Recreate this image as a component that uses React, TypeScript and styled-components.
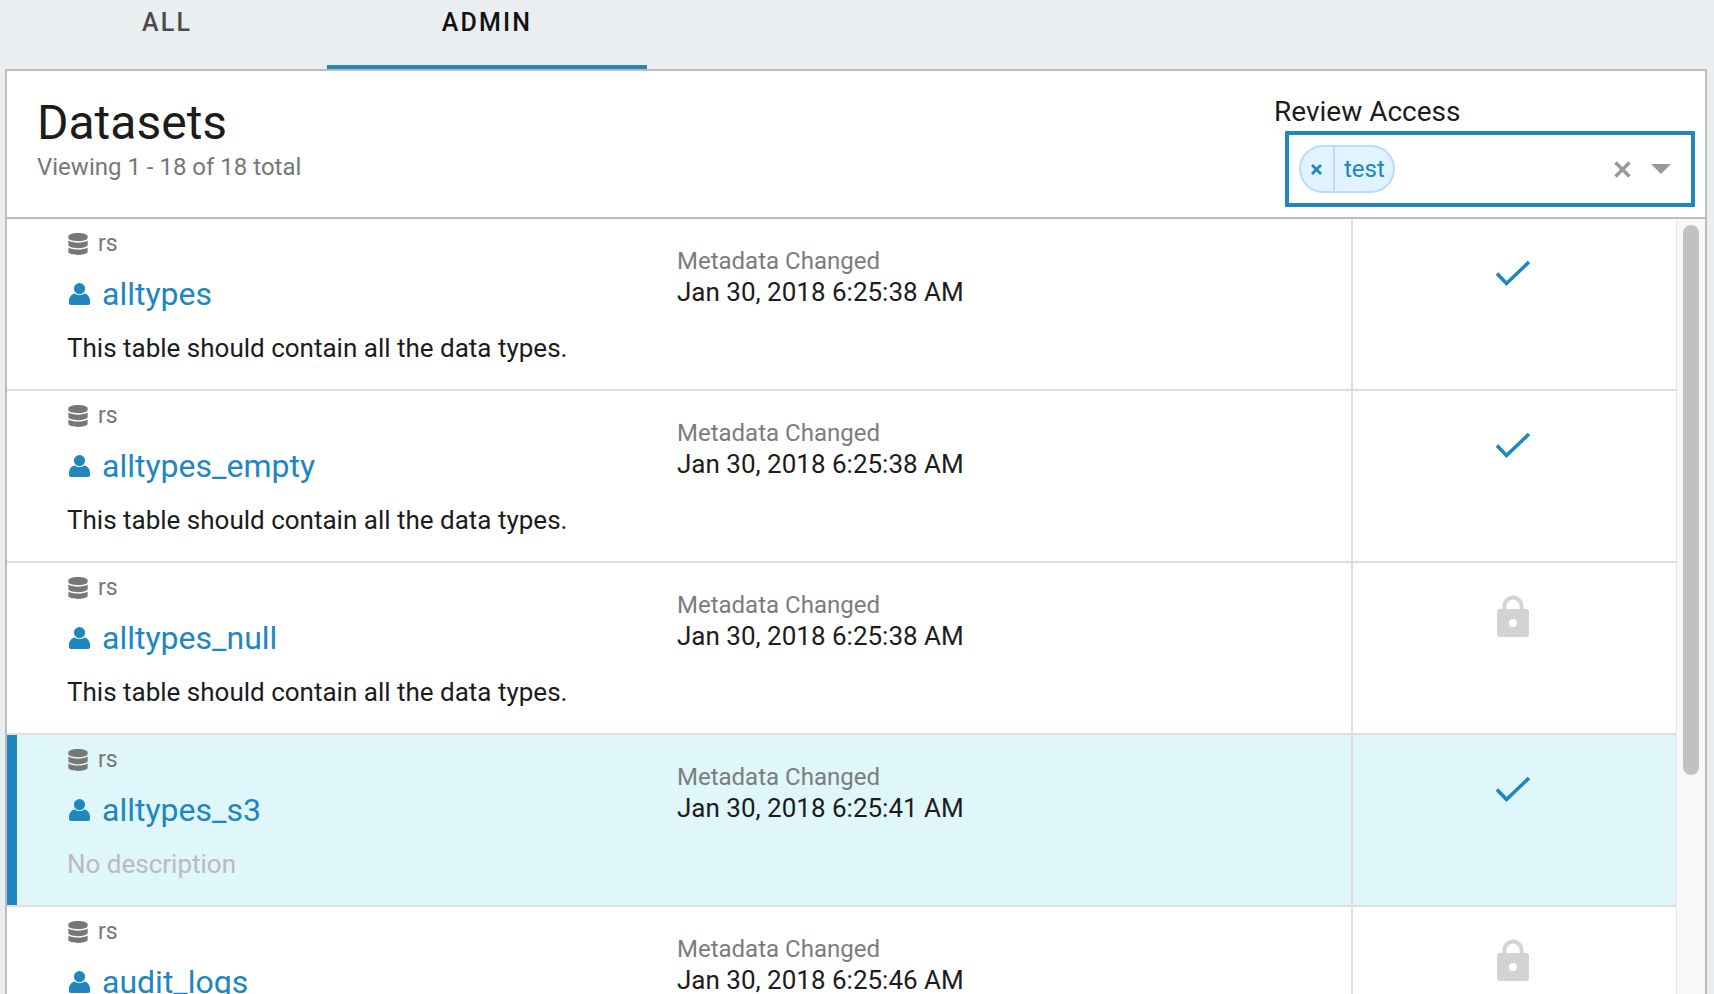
import styled, { createGlobalStyle } from "styled-components";
import { FaDatabase } from "react-icons/fa";

const BLUE = "#2086c0";
const LINE = "#dedede";
const BORDER = "#bcbcbc";

interface Dataset {
  name: string;
  description?: string;
  changed: string;
  access: boolean;
  selected?: boolean;
}

const DATASETS: Dataset[] = [
  {
    name: "alltypes",
    description: "This table should contain all the data types.",
    changed: "Jan 30, 2018 6:25:38 AM",
    access: true,
  },
  {
    name: "alltypes_empty",
    description: "This table should contain all the data types.",
    changed: "Jan 30, 2018 6:25:38 AM",
    access: true,
  },
  {
    name: "alltypes_null",
    description: "This table should contain all the data types.",
    changed: "Jan 30, 2018 6:25:38 AM",
    access: false,
  },
  {
    name: "alltypes_s3",
    changed: "Jan 30, 2018 6:25:41 AM",
    access: true,
    selected: true,
  },
  {
    // only the top of this row is on screen
    name: "audit_logs",
    description: "",
    changed: "Jan 30, 2018 6:25:46 AM",
    access: false,
  },
];

const CheckIcon = () => (
  <svg width="36" height="28" viewBox="0 0 36 28" fill="none">
    <path d="M2 13.5L11.5 23.5L34 2" stroke={BLUE} strokeWidth="3.6" />
  </svg>
);

const LockIcon = () => (
  <svg width="32" height="42" viewBox="0 0 32 42">
    <path
      d="M7.5 16V11a8.5 8.5 0 0 1 17 0v5"
      fill="none"
      stroke="#d3d3d3"
      strokeWidth="4"
    />
    <path
      fillRule="evenodd"
      fill="#d3d3d3"
      d="M3 14h26a3 3 0 0 1 3 3v22a3 3 0 0 1-3 3H3a3 3 0 0 1-3-3V17a3 3 0 0 1 3-3zM16 24a4 4 0 1 0 0 8a4 4 0 0 0 0-8z"
    />
  </svg>
);

const UserIcon = () => (
  <svg width="21" height="22" viewBox="0 0 21 22" fill={BLUE}>
    <circle cx="10.5" cy="5.6" r="5.6" />
    <path d="M6 10.5c1.2 1 2.8 1.6 4.5 1.6s3.3-.6 4.5-1.6c3.6.6 6 3.5 6 7.3V20a2 2 0 0 1-2 2H2a2 2 0 0 1-2-2v-2.200c0-3.800 2.400-6.700 6-7.300z" />
  </svg>
);

const App = () => (
  <Page>
    <GlobalStyle />
    <Tabs>
      <Tab>ALL</Tab>
      <Tab $active>ADMIN</Tab>
    </Tabs>
    <Panel>
      <Header>
        <div>
          <Title>Datasets</Title>
          <Count>Viewing 1 - 18 of 18 total</Count>
        </div>
        <Filter>
          <FilterLabel>Review Access</FilterLabel>
          <Select>
            <Chip>
              <ChipRemove>
                <svg width="11" height="11" viewBox="0 0 11 11">
                  <path d="M1 1L10 10M10 1L1 10" stroke={BLUE} strokeWidth="2.8" />
                </svg>
              </ChipRemove>
              <ChipLabel>test</ChipLabel>
            </Chip>
            <SelectControls>
              <svg width="17" height="17" viewBox="0 0 17 17">
                <path d="M1.5 1.5L15.5 15.5M15.5 1.5L1.5 15.5" stroke="#999" strokeWidth="3.4" />
              </svg>
              <Caret />
            </SelectControls>
          </Select>
        </Filter>
      </Header>
      <Body>
        <List>
          {DATASETS.map((d) => (
            <Row key={d.name} $selected={d.selected}>
              <Info>
                <Source>
                  <FaDatabase size={22} />
                  rs
                </Source>
                <Name>
                  <UserIcon />
                  {d.name}
                </Name>
                <Description $empty={d.description === undefined}>
                  {d.description ?? "No description"}
                </Description>
              </Info>
              <Meta>
                <MetaLabel>Metadata Changed</MetaLabel>
                <MetaValue>{d.changed}</MetaValue>
              </Meta>
              <AccessCell $locked={!d.access}>
                {d.access ? <CheckIcon /> : <LockIcon />}
              </AccessCell>
            </Row>
          ))}
        </List>
        <ScrollTrack>
          <ScrollThumb />
        </ScrollTrack>
      </Body>
    </Panel>
  </Page>
);

const GlobalStyle = createGlobalStyle`
  html, body {
    margin: 0;
    padding: 0;
    background: #eaeef1;
  }
  * {
    box-sizing: border-box;
  }
`;

const Page = styled.div`
  height: 994px;
  overflow: hidden;
  padding: 0 7px 0 5px;
  font-family: Roboto, "Liberation Sans", sans-serif;
  color: #1c1c1c;
`;

const Tabs = styled.div`
  display: flex;
  height: 69px;
  padding-left: 2px;
`;

const Tab = styled.div<{ $active?: boolean }>`
  width: 320px;
  padding-top: 8px;
  text-align: center;
  font-size: 25px;
  line-height: 30px;
  font-weight: 500;
  letter-spacing: 2.2px;
  color: ${(p) => (p.$active ? "#111" : "#4a4a4a")};
  border-bottom: 4px solid ${(p) => (p.$active ? BLUE : "transparent")};
`;

const Panel = styled.div`
  height: 925px;
  display: flex;
  flex-direction: column;
  background: #fff;
  border: 2px solid ${BORDER};
  border-bottom: none;
`;

const Header = styled.div`
  flex: none;
  height: 148px;
  display: flex;
  justify-content: space-between;
  padding: 23px 10px 0 30px;
  border-bottom: 2px solid ${BORDER};
`;

const Title = styled.h1`
  margin: 0;
  font-size: 48px;
  line-height: 58px;
  font-weight: 400;
`;

const Count = styled.div`
  font-size: 24px;
  line-height: 28px;
  margin-top: 1px;
  color: #777;
`;

const Filter = styled.div`
  display: flex;
  flex-direction: column;
  align-items: flex-end;
  margin-top: -2px;
`;

const FilterLabel = styled.div`
  align-self: flex-start;
  margin-left: -11px;
  font-size: 28px;
  line-height: 32px;
  margin-top: 4px;
  margin-bottom: 3px;
`;

const Select = styled.div`
  width: 410px;
  height: 76px;
  display: flex;
  align-items: center;
  justify-content: space-between;
  padding: 0 20px 0 10px;
  border: 4px solid ${BLUE};
`;

const Chip = styled.div`
  display: flex;
  align-items: stretch;
  height: 48px;
  border: 2px solid #b8dcff;
  border-radius: 24px;
  background: #e1f3ff;
  color: ${BLUE};
`;

const ChipRemove = styled.span`
  width: 34px;
  display: flex;
  align-items: center;
  justify-content: center;
  padding-right: 1px;
  border-right: 2px solid #b8dcff;
`;

const ChipLabel = styled.span`
  padding: 0 8px 0 9px;
  font-size: 24px;
  line-height: 44px;
`;

const SelectControls = styled.div`
  display: flex;
  align-items: center;
  gap: 20px;
`;

const Caret = styled.span`
  width: 0;
  height: 0;
  border-left: 10px solid transparent;
  border-right: 10px solid transparent;
  border-top: 10px solid #999;
`;

const Body = styled.div`
  flex: 1;
  min-height: 0;
  display: flex;
`;

const List = styled.div`
  flex: 1;
  min-width: 0;
  overflow: hidden;
`;

const Row = styled.div<{ $selected?: boolean }>`
  height: 172px;
  display: flex;
  padding-left: 10px;
  border-bottom: 2px solid ${LINE};
  background: ${(p) => (p.$selected ? "#dff6fa" : "#fff")};
  box-shadow: ${(p) => (p.$selected ? `inset 10px 0 0 ${BLUE}` : "none")};
`;

const Info = styled.div`
  width: 660px;
  padding: 10px 0 0 50px;
`;

const Source = styled.div`
  display: flex;
  align-items: center;
  gap: 9px;
  font-size: 23px;
  line-height: 30px;
  color: #777;

  svg {
    color: #777;
  }
`;

const Name = styled.div`
  display: flex;
  align-items: center;
  gap: 12px;
  margin-top: 15px;
  padding-left: 2px;
  font-size: 32px;
  line-height: 40px;
  color: ${BLUE};
`;

const Description = styled.div<{ $empty?: boolean }>`
  margin-top: 18px;
  font-size: 26px;
  line-height: 32px;
  color: ${(p) => (p.$empty ? "#bbb" : "#1c1c1c")};
`;

const Meta = styled.div`
  width: 674px;
  padding-top: 27px;
`;

const MetaLabel = styled.div`
  font-size: 24px;
  line-height: 30px;
  color: #7c7c7c;
`;

const MetaValue = styled.div`
  font-size: 26px;
  line-height: 32px;
`;

const AccessCell = styled.div<{ $locked?: boolean }>`
  flex: 1;
  display: flex;
  justify-content: center;
  align-items: flex-start;
  padding: ${(p) => (p.$locked ? "32px" : "41px")} 4px 0 0;
  border-left: 2px solid ${LINE};
`;

const ScrollTrack = styled.div`
  flex: none;
  width: 29px;
  padding: 6px 6px 0 6px;
  background: #f8f8f8;
  border-left: 1px solid #e8e8e8;
`;

const ScrollThumb = styled.div`
  width: 16px;
  height: 550px;
  border-radius: 8px;
  background: #c1c1c1;
`;

export default App;
